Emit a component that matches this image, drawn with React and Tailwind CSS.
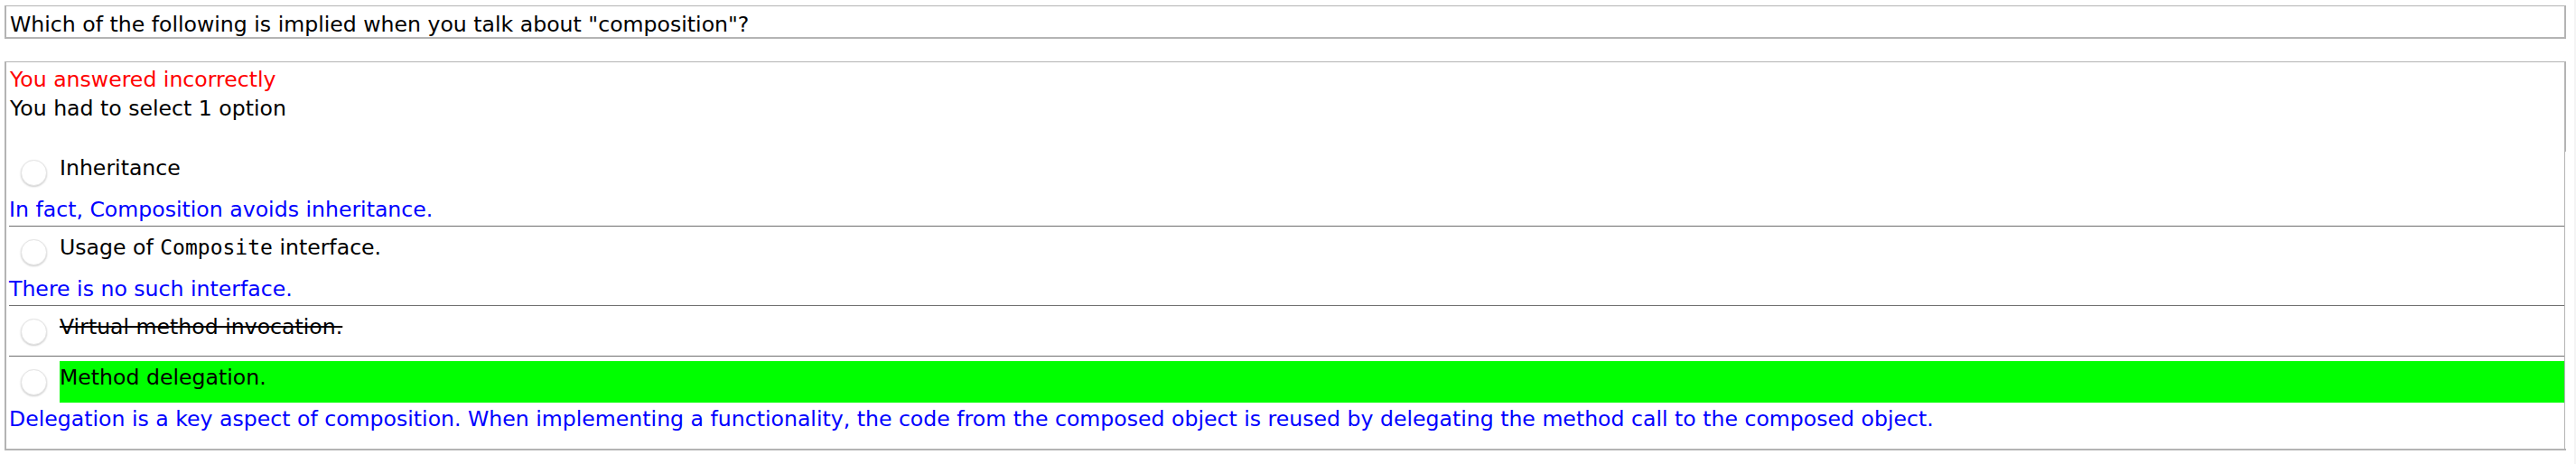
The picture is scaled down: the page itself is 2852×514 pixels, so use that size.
import React from 'react';

// Quiz result: one question, four options, feedback under each one
const question = 'Which of the following is implied when you talk about "composition"?';

const options = [
  {
    id: 'a',
    label: 'Inheritance',
    explanation: 'In fact, Composition avoids inheritance.',
  },
  {
    id: 'b',
    label: (
      <>
        Usage of <code className="font-['DejaVu_Sans_Mono',monospace] text-[23px]">Composite</code> interface.
      </>
    ),
    explanation: 'There is no such interface.',
  },
  {
    id: 'c',
    label: 'Virtual method invocation.',
    struck: true,
  },
  {
    id: 'd',
    label: 'Method delegation.',
    correct: true,
    explanation:
      'Delegation is a key aspect of composition. When implementing a functionality, the code from the composed object is reused by delegating the method call to the composed object.',
  },
];

const Radio = () => (
  <span className="block w-[29px] h-[29px] rounded-full bg-white border border-[#e4e4e4] shadow-[0_1px_2px_rgba(0,0,0,0.2)] shrink-0" />
);

const OptionRow = ({ option, first, last }) => {
  const pad = last ? '' : option.explanation ? 'pb-[2px]' : 'pb-[4px]';
  return (
    <div className={`${first ? '' : 'border-t border-[#6f6f6f] pt-[5px]'} ${pad}`}>
      <div className="flex items-center h-[46px]">
        <span className="ml-[13px] mr-[14px]">
          <Radio />
        </span>
        <span
          className={`flex-1 h-[46px] pt-[2px] leading-[32px] text-black ${
            option.correct ? 'bg-[#00ff00]' : ''
          } ${option.struck ? 'line-through' : ''}`}
        >
          {option.label}
        </span>
      </div>
      {option.explanation && (
        <div className="h-[34px] pt-[2px] leading-[32px] text-[#0000ff] whitespace-nowrap">
          {option.explanation}
        </div>
      )}
    </div>
  );
};

export default function App() {
  return (
    <div className="flex min-h-[514px] bg-white font-['DejaVu_Sans',sans-serif] text-[23.6px] text-black">
      <main className="flex-1 ml-[5px] mr-[9px] pt-[6px]">
        {/* Question */}
        <section className="h-[37px] border-t border-l-2 border-r-2 border-b-2 border-[#b4b4b4] pl-[4px] pt-[6px] leading-[28px] whitespace-nowrap">
          {question}
        </section>

        {/* Result */}
        <section className="mt-[25px] border-t border-l-2 border-b-2 border-[#b4b4b4]">
          <div className="border-r-2 border-[#b4b4b4] pl-[4px] pt-[3px] leading-[32px]">
            <div className="text-[#ff0000]">You answered incorrectly</div>
            <div>You had to select 1 option</div>
            <div className="h-[32px]" />
          </div>

          <div className="pl-[3px] mr-[1px] border-r border-[#b4b4b4]">
            {options.map((o, i) => (
              <OptionRow key={o.id} option={o} first={i === 0} last={i === options.length - 1} />
            ))}
            <div className="h-[17px]" />
          </div>
        </section>
      </main>
      <div className="w-[2px] bg-[#f4f4f4]" />
    </div>
  );
}
